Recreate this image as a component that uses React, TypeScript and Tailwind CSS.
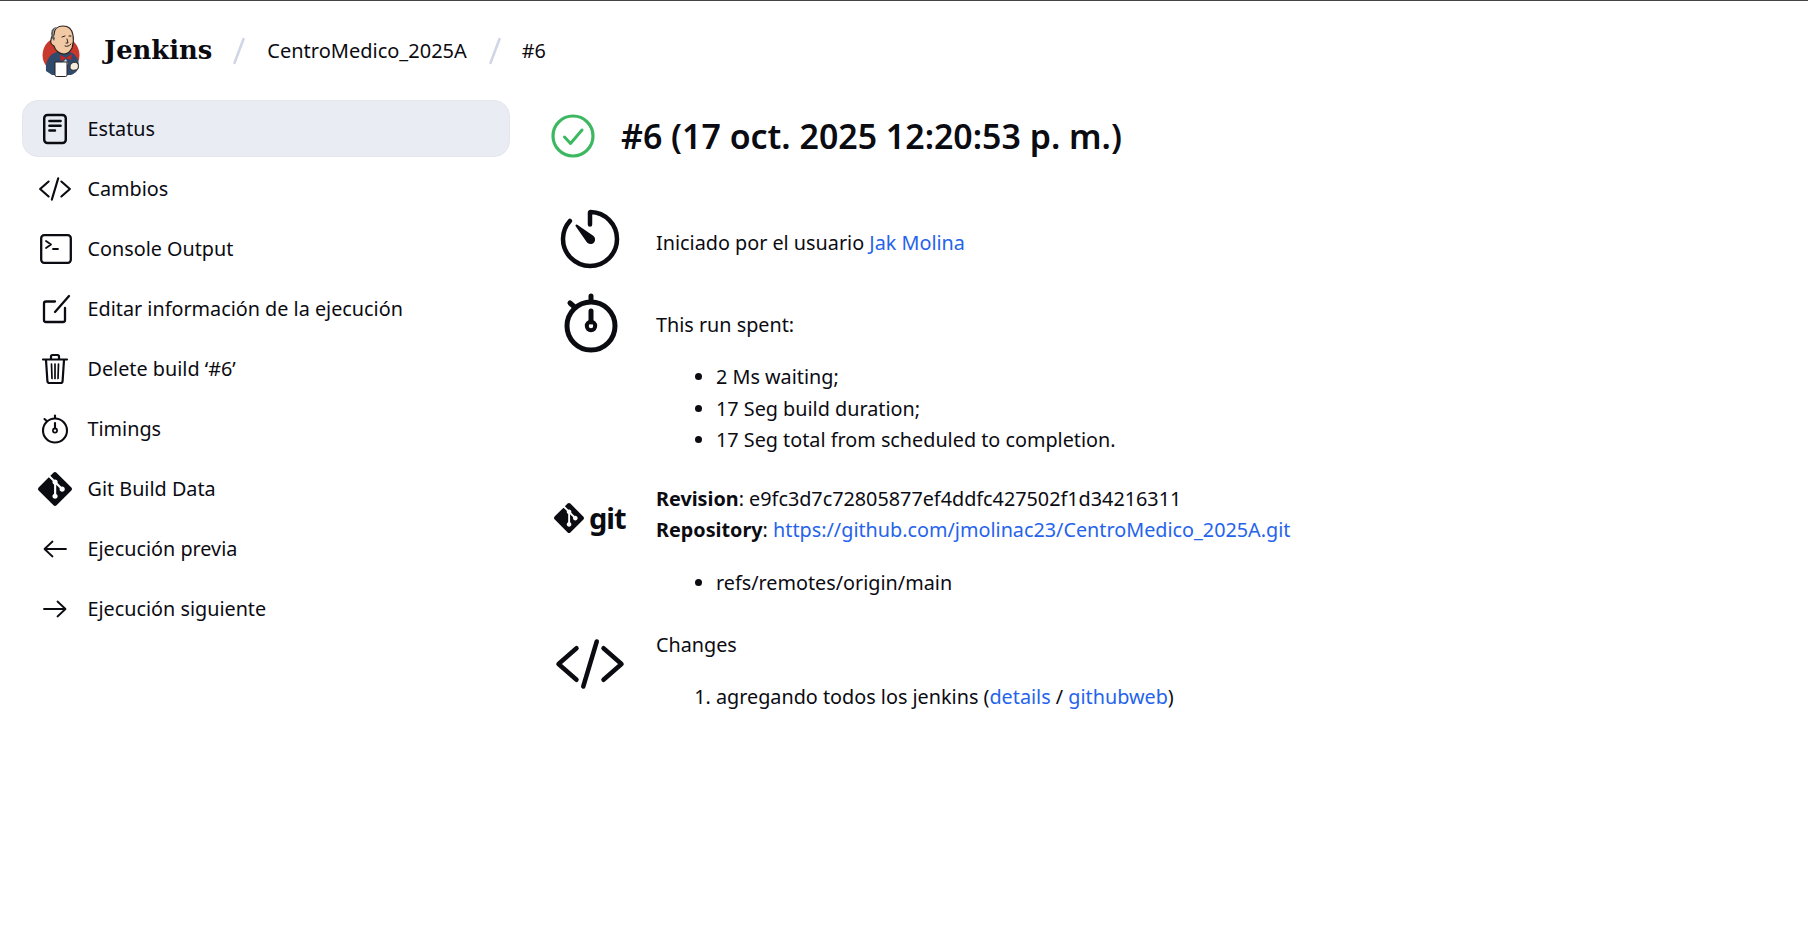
import React from "react";
import { IoCodeSlashOutline, IoTimerOutline } from "react-icons/io5";
import { SiGit } from "react-icons/si";

const F = "font-['Noto_Sans','Open_Sans',sans-serif]";
const INK = "#0b0b12";

const DocIcon = () => (
  <svg viewBox="0 0 32 36" className="w-[30px] h-[34px]" fill="none" stroke={INK} strokeWidth="2.6" strokeLinecap="round" strokeLinejoin="round">
    <rect x="4.5" y="3" width="23" height="30" rx="3.5" />
    <path d="M10 9.5h12M10 14.5h12M10 19.5h6" />
  </svg>
);
const TermIcon = () => (
  <svg viewBox="0 0 32 30" className="w-[32px] h-[30px] ml-[1px]" fill="none" stroke={INK} strokeWidth="2.3" strokeLinecap="round" strokeLinejoin="round">
    <rect x="1.2" y="1.2" width="29.6" height="27.6" rx="3" />
    <path d="M6 7l5 3.5-5 3.5M13 15h5" strokeWidth="1.8" />
  </svg>
);
const EditIcon = () => (
  <svg viewBox="0 0 32 30" className="w-[32px] h-[30px] ml-[1px]" fill="none" stroke={INK} strokeWidth="2.3" strokeLinecap="round" strokeLinejoin="round">
    <path d="M15 7.5H6a2 2 0 0 0-2 2V26a2 2 0 0 0 2 2h17a2 2 0 0 0 2-2V14" />
    <path d="M15 18L29 2" />
  </svg>
);
const TrashIcon = () => (
  <svg viewBox="0 0 28 32" className="w-[28px] h-[32px]" fill="none" stroke={INK} strokeWidth="2.2" strokeLinecap="round" strokeLinejoin="round">
    <path d="M2 6.5h24" />
    <path d="M10 6V3.5A1.5 1.5 0 0 1 11.5 2h5A1.5 1.5 0 0 1 18 3.5V6" />
    <path d="M5 7l1.4 21a2 2 0 0 0 2 2h11.2a2 2 0 0 0 2-2L23 7" />
    <path d="M10.5 11l.5 14.5M14 11v14.5M17.5 11l-.5 14.5" strokeWidth="1.7" />
  </svg>
);
const ArrowL = () => (
  <svg viewBox="0 0 24 18" className="w-[24px] h-[18px]" fill="none" stroke={INK} strokeWidth="1.8" strokeLinecap="round" strokeLinejoin="round">
    <path d="M23 9H2M9.5 1.5L1.5 9l8 7.5" />
  </svg>
);
const ArrowR = () => (
  <svg viewBox="0 0 24 18" className="w-[24px] h-[18px]" fill="none" stroke={INK} strokeWidth="1.8" strokeLinecap="round" strokeLinejoin="round">
    <path d="M1 9h21M14.5 1.5l8 7.5-8 7.5" />
  </svg>
);
const Stopwatch = ({ className, sw }: { className: string; sw: number }) => (
  <svg viewBox="0 0 56 60" className={className} fill="none" stroke={INK} strokeWidth={sw} strokeLinecap="round">
    <circle cx="28" cy="33" r="24" />
    <path d="M28 3v5" />
    <path d="M7 10l4 3.5" />
    <path d="M28 18v11" />
    <circle cx="28" cy="33" r="4.2" strokeWidth={sw * 0.8} />
  </svg>
);
const Check = () => (
  <svg viewBox="0 0 44 44" className="w-[44px] h-[44px] shrink-0" fill="none" stroke="#3db860" strokeLinecap="round" strokeLinejoin="round">
    <circle cx="22" cy="22" r="20" strokeWidth="3.2" />
    <path d="M13.5 23l6 6.5L31 16" strokeWidth="3" />
  </svg>
);
const Slash = () => (
  <svg viewBox="0 0 14 28" className="w-[14px] h-[28px] shrink-0" fill="none" stroke="#d0d6e5" strokeWidth="2.6" strokeLinecap="round">
    <path d="M11.5 2L2.5 26" />
  </svg>
);
const Logo = () => (
  <svg viewBox="0 0 42 52" className="w-[42px] h-[52px] shrink-0">
    <circle cx="21" cy="30" r="18.5" fill="#c9382c" />
    <path d="M6 46c-1-9 3-17 11-19l13 0c6 2 9 8 9 15-1 4-5 7-8 8H12z" fill="#2f4a6b" />
    <path d="M14 10c0-6 4-9 9-9s9 3 10 9c1 5 0 10-1 13-2 4-5 6-8 6-5 0-9-4-10-8-2-1-4-3-3-6 0-3 2-5 3-5z" fill="#f1c9a5" stroke="#2c211b" strokeWidth="1.1" />
    <path d="M15 13c-3-3-2-9 2-11-5 0-7 5-5 11l2 3z" fill="#5c5c5c" />
    <path d="M22 12l3-1M29 11l2 0M25 21c2 1 4 0 6-2M27 14l1 4-2 0" stroke="#2c211b" strokeWidth="1" fill="none" strokeLinecap="round" />
    <path d="M20 30l6 3 6-4-1 6-5-2-5 3z" fill="#d0211c" />
    <path d="M26 34l2 5-3 2-2-4z" fill="#cfd8e2" />
    <path d="M15 37h12v13a1.5 1.5 0 0 1-1.5 1.5h-9A1.5 1.5 0 0 1 15 50z" fill="#fff" stroke="#2c211b" strokeWidth="1" />
    <path d="M32 38c2-1 5-1 6 1 1 3 0 6-3 6-3 1-5-1-5-3 0-2 1-3 2-4z" fill="#f4ecdf" stroke="#2c211b" strokeWidth="0.9" />
  </svg>
);

const items: [React.ReactNode, string][] = [
  [<TermIcon />, "Console Output"],
  [<EditIcon />, "Editar información de la ejecución"],
  [<TrashIcon />, "Delete build ‘#6’"],
  [<Stopwatch className="w-[28px] h-[30px]" sw={4.2} />, "Timings"],
  [<SiGit size={34} color={INK} />, "Git Build Data"],
  [<ArrowL />, "Ejecución previa"],
  [<ArrowR />, "Ejecución siguiente"],
];

const Row = ({ icon, label, active }: { icon: React.ReactNode; label: string; active?: boolean }) => (
  <div className={`flex items-center h-[57px] mb-[3px] rounded-[16px] ${active ? "pl-[15px] bg-[#e9ecf3] border border-[#e3e6ee]" : "pl-[16px]"}`}>
    <span className="w-[34px] flex items-center justify-center shrink-0">{icon}</span>
    <span className="ml-[15.5px]">{label}</span>
  </div>
);

const A = ({ children }: { children: React.ReactNode }) => <a className="text-[#2563eb]">{children}</a>;

export default function App() {
  return (
    <div className={`${F} min-h-[932px] bg-white text-[#0b0b12] text-[19.8px] leading-[31.4px] border-t border-[#444]`}>
      <header className="flex items-center h-[99px] pl-[40px]">
        <Logo />
        <span className="ml-[22px] font-['DejaVu_Serif',serif] font-bold text-[25.8px]">Jenkins</span>
        <span className="ml-[20px]"><Slash /></span>
        <span className="ml-[21px] text-[20px]">CentroMedico_2025A</span>
        <span className="ml-[21px]"><Slash /></span>
        <span className="ml-[20px]">#6</span>
      </header>
      <div className="flex pl-[22px]">
        <nav className="w-[488px] shrink-0">
          <Row active icon={<DocIcon />} label="Estatus" />
          <Row icon={<IoCodeSlashOutline size={34} color={INK} />} label="Cambios" />
          {items.map(([i, l]) => (
            <Row key={l} icon={i} label={l} />
          ))}
        </nav>
        <main className="ml-[41px] flex-1">
          <div className="flex items-center h-[44px] mt-[14px]">
            <Check />
            <h1 className="ml-[26px] text-[33.9px] font-semibold leading-[44px]">#6 (17 oct. 2025 12:20:53 p. m.)</h1>
          </div>
          <section className="flex mt-[45px]">
            <span className="w-[105px] flex justify-center pr-[28px] shrink-0">
              <IoTimerOutline size={72} color={INK} />
            </span>
            <p className="mt-[24px]">
              Iniciado por el usuario <A>Jak Molina</A>
            </p>
          </section>
          <section className="flex mt-[18px]">
            <span className="w-[105px] flex justify-center pr-[26px] shrink-0">
              <Stopwatch className="w-[58px] h-[60px]" sw={5} />
            </span>
            <div className="mt-[16px]">
              <p>This run spent:</p>
              <ul className="list-disc pl-[60px] mt-[21px]">
                <li>2 Ms waiting;</li>
                <li>17 Seg build duration;</li>
                <li>17 Seg total from scheduled to completion.</li>
              </ul>
            </div>
          </section>
          <section className="flex mt-[27px]">
            <span className="w-[105px] flex items-start gap-[5px] pt-[20px] shrink-0 pl-[3px]">
              <SiGit size={30} color={INK} />
              <span className="font-bold text-[29px] leading-[30px] tracking-[-1px]">git</span>
            </span>
            <div>
              <p><b className="font-bold">Revision</b>: e9fc3d7c72805877ef4ddfc427502f1d34216311</p>
              <p><b className="font-bold">Repository</b>: <A>https://github.com/jmolinac23/CentroMedico_2025A.git</A></p>
              <ul className="list-disc pl-[60px] mt-[22px]">
                <li>refs/remotes/origin/main</li>
              </ul>
            </div>
          </section>
          <section className="flex mt-[30px]">
            <span className="w-[105px] flex justify-center pr-[28px] shrink-0 -mt-[1px]">
              <IoCodeSlashOutline size={72} color={INK} />
            </span>
            <div>
              <p>Changes</p>
              <ol className="list-decimal pl-[60px] mt-[21px]">
                <li>agregando todos los jenkins (<A>details</A> / <A>githubweb</A>)</li>
              </ol>
            </div>
          </section>
        </main>
      </div>
    </div>
  );
}
